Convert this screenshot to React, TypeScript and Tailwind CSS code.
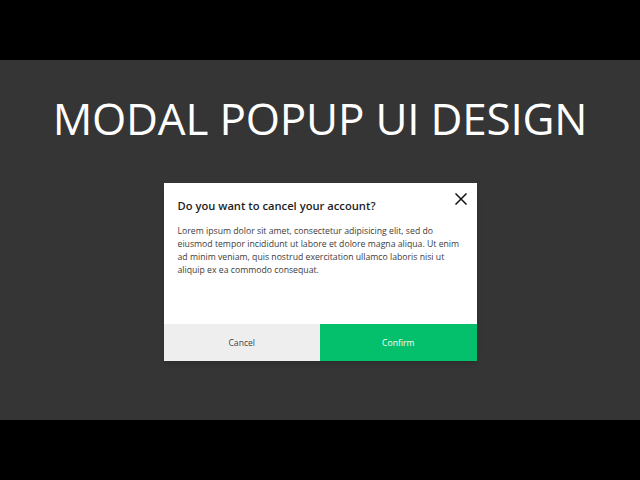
import type { ReactElement } from 'react';

function CloseIcon(): ReactElement {
  return (
    <svg width="12" height="12" viewBox="0 0 12 12" fill="none">
      <path d="M1 1L11 11M11 1L1 11" stroke="#111" strokeWidth="1.5" strokeLinecap="square" />
    </svg>
  );
}

export default function App(): ReactElement {
  return (
    <div className="flex h-[480px] w-[640px] flex-col bg-black font-['Open_Sans',sans-serif]">
      <div className="h-[60px] bg-black" />
      <main className="flex h-[360px] flex-col items-center bg-[#353535] pt-[32px]">
        <h1 className="text-[44px] font-normal leading-[52px] tracking-[-0.2px] text-white">
          MODAL POPUP UI DESIGN
        </h1>
        <div className="relative mt-[39px] flex w-[313px] flex-col bg-white shadow-md">
          <div className="h-[141px] px-[14px] pt-[14px]">
            <h2 className="text-[11.2px] font-semibold leading-[17px] text-[#1e1e1e]">
              Do you want to cancel your account?
            </h2>
            <p className="mt-[11px] text-[8.7px] leading-[12.9px] text-[#3c3c3c]">
              Lorem ipsum dolor sit amet, consectetur adipisicing elit, sed do eiusmod tempor
              incididunt ut labore et dolore magna aliqua. Ut enim ad minim veniam, quis nostrud
              exercitation ullamco laboris nisi ut aliquip ex ea commodo consequat.
            </p>
          </div>
          <button className="absolute right-[9px] top-[9px] p-[1px]" aria-label="Close">
            <CloseIcon />
          </button>
          <div className="grid h-[37px] grid-cols-2 text-[8.6px]">
            <button className="bg-[#eeeeee] pt-[2px] text-[#444]">Cancel</button>
            <button className="bg-[#04bf6c] pt-[2px] text-white">Confirm</button>
          </div>
        </div>
      </main>
      <div className="h-[60px] bg-black" />
    </div>
  );
}
